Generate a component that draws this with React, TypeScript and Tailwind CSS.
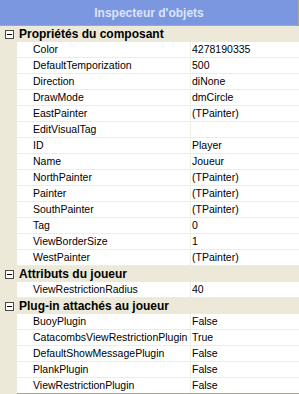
import React from 'react'

type Row = { name: string; value: string }
type Section = { title: string; rows: Row[] }

const sections: Section[] = [
  {
    title: "Propriétés du composant",
    rows: [
      { name: "Color", value: "4278190335" },
      { name: "DefaultTemporization", value: "500" },
      { name: "Direction", value: "diNone" },
      { name: "DrawMode", value: "dmCircle" },
      { name: "EastPainter", value: "(TPainter)" },
      { name: "EditVisualTag", value: "" },
      { name: "ID", value: "Player" },
      { name: "Name", value: "Joueur" },
      { name: "NorthPainter", value: "(TPainter)" },
      { name: "Painter", value: "(TPainter)" },
      { name: "SouthPainter", value: "(TPainter)" },
      { name: "Tag", value: "0" },
      { name: "ViewBorderSize", value: "1" },
      { name: "WestPainter", value: "(TPainter)" },
    ],
  },
  {
    title: "Attributs du joueur",
    rows: [{ name: "ViewRestrictionRadius", value: "40" }],
  },
  {
    title: "Plug-in attachés au joueur",
    rows: [
      { name: "BuoyPlugin", value: "False" },
      { name: "CatacombsViewRestrictionPlugin", value: "True" },
      { name: "DefaultShowMessagePlugin", value: "False" },
      { name: "PlankPlugin", value: "False" },
      { name: "ViewRestrictionPlugin", value: "False" },
    ],
  },
]

// petit carré "moins" des catégories repliables
const MinusBox = () => (
  <div className="w-[9px] h-[9px] border border-[#4a4a4a] bg-white flex items-center justify-center">
    <div className="w-[5px] h-px bg-black" />
  </div>
)

const PropRow = ({ row, last }: { row: Row; last: boolean }) => (
  <div className="flex h-[16px]">
    <div className="w-[17px] bg-[#ECE9D8] shrink-0" />
    <div className={`flex flex-1 bg-white border-b ${last ? "border-[#ACA899]" : "border-[#EDEBE2]"}`}>
      <div className="w-[173px] shrink-0 pl-[16px] leading-[15px] whitespace-nowrap overflow-hidden">{row.name}</div>
      <div className="flex-1 border-l border-[#EDEBE2] pl-[1px] leading-[15px]">{row.value}</div>
    </div>
  </div>
)

export default function App() {
  return (
    <div className="w-[299px] h-[394px] bg-white overflow-hidden text-[10.5px] text-black" style={{ fontFamily: '"Liberation Sans", Arial, sans-serif' }}>
      <div className="h-[26px] bg-[#7B97E0] border-b border-r border-[#ACA899] flex items-center justify-center font-bold text-[12px] text-[#DCE4F8]">
        Inspecteur d'objets
      </div>
      {sections.map((s, si) => (
        <div key={s.title}>
          <div className="h-[16px] bg-[#ECE9D8] flex items-center gap-[5px] pl-[5px] font-bold text-[12px]">
            <MinusBox />
            <span className="leading-[16px]">{s.title}</span>
          </div>
          {s.rows.map((r, i) => (
            <PropRow key={r.name} row={r} last={si === sections.length - 1 && i === s.rows.length - 1} />
          ))}
        </div>
      ))}
    </div>
  )
}
